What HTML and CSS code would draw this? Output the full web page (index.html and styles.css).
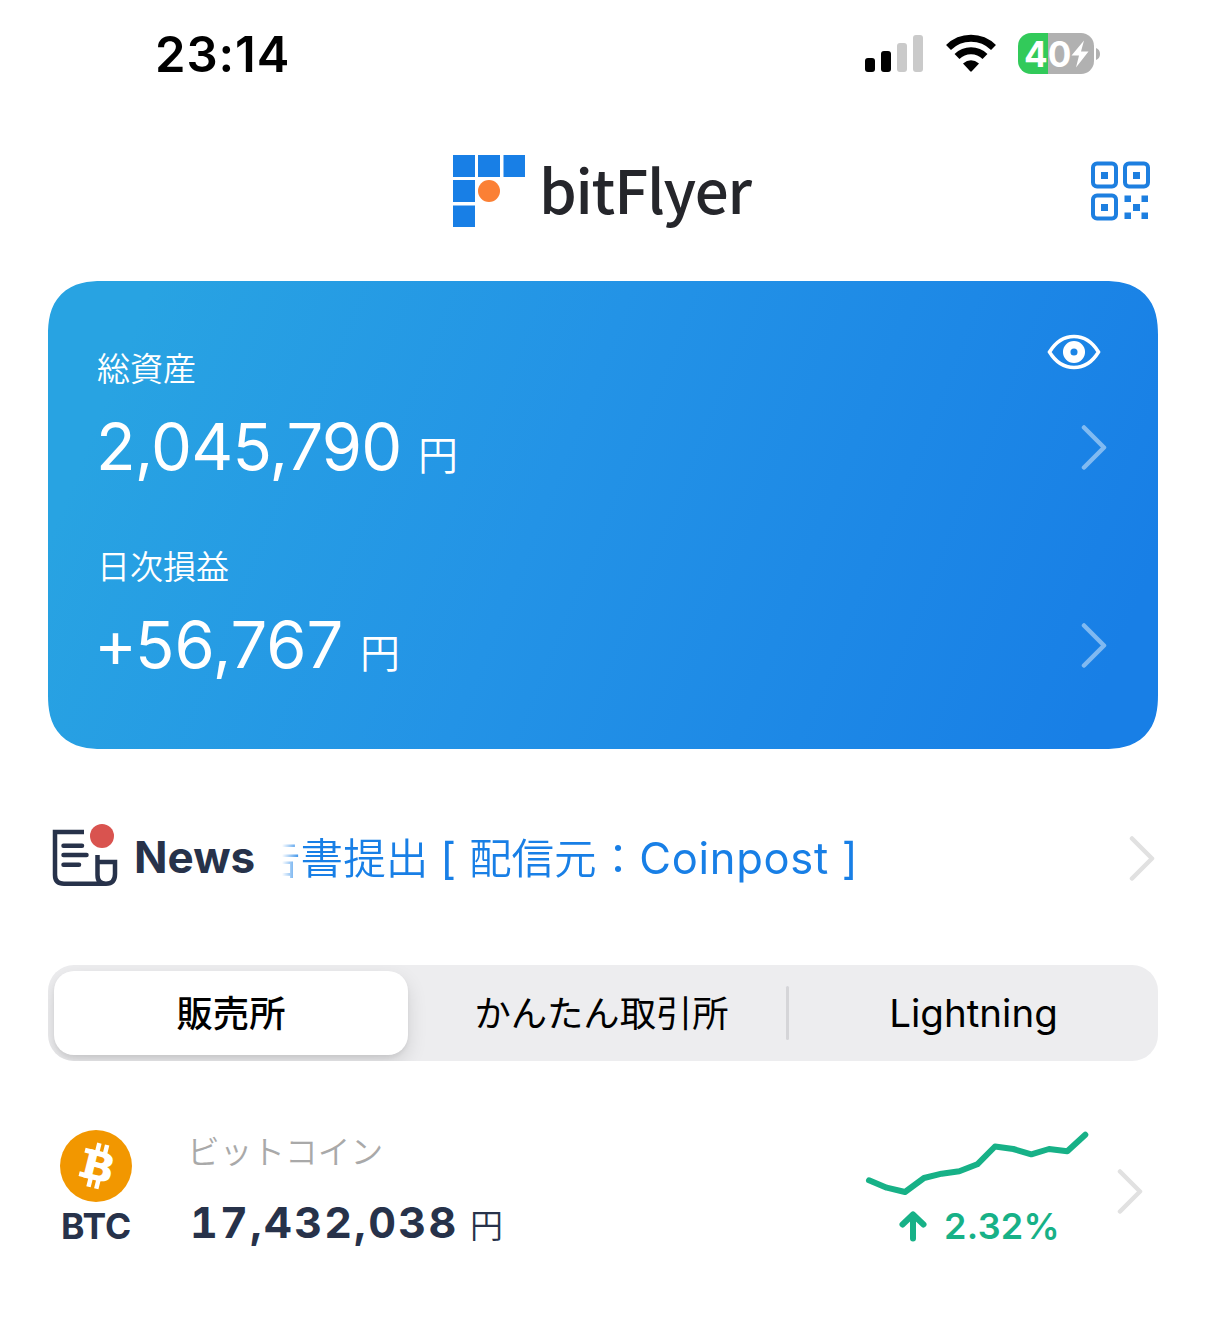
FILE: index.html
```html
<!DOCTYPE html>
<html lang="ja">
	<head>
		<meta charset="UTF-8" />
		<meta name="viewport" content="width=device-width, initial-scale=1.0" />
		<title>bitFlyer</title>
		<link rel="stylesheet" href="styles.css">
	</head>
	<body>
		<div id="app">
			<div class="status">
				<span class="time">23:14</span>
				<svg class="signal" width="60" height="40" viewBox="0 0 60 40">
					<rect x="1" y="24" width="10" height="14" rx="3" />
					<rect x="17" y="17" width="10" height="21" rx="3" />
					<rect class="off" x="33" y="9" width="10" height="29" rx="3" />
					<rect class="off" x="49" y="1" width="10" height="37" rx="3" />
				</svg>
				<svg class="wifi" width="52" height="40" viewBox="0 0 52 40">
					<path d="M3.500 13.500A32 32 0 0 1 48.500 13.500" />
					<path d="M12 22.500A20 20 0 0 1 40 22.500" />
					<path class="dot" d="M18 29.500Q26 23 34 29.500L26.800 37.300Q26 38 25.200 37.300Z" />
				</svg>
				<div class="battery">
					<span>40</span>
					<svg width="20" height="28" viewBox="0 0 18 28">
						<path d="M13 0.500L0.500 15.500H8L5 27.500L17.500 11.500H10Z" />
					</svg>
				</div>
				<svg class="cap" width="5" height="14" viewBox="0 0 5 14">
					<path d="M0 1Q4 2.500 4 7T0 13Z" />
				</svg>
			</div>

			<header>
				<div class="logo">
					<svg width="72" height="72" viewBox="0 0 72 72">
						<path fill="#187fe6" d="M0 0h22v22H0zM25 0h22v22H25zM50.500 0h21.500v22H50.500zM0 25h22v22H0zM0 50.500h22v21.500H0z" />
						<circle cx="36" cy="36" r="11" fill="#fb8035" />
					</svg>
					<span>bitFlyer</span>
				</div>
				<svg class="qr" width="60" height="60" viewBox="0 0 60 60">
					<g fill="none" stroke="#1d7fe0" stroke-width="4">
						<rect x="3" y="2.500" width="23" height="23" rx="4" />
						<rect x="35" y="2.500" width="23" height="23" rx="4" />
						<rect x="3" y="34.500" width="23" height="23" rx="4" />
					</g>
					<path fill="#1d7fe0" d="M11 11h7v7h-7zM43 11h7v7h-7zM11 43h7v7h-7zM34.500 34.500h6.500v6.500h-6.500zM51.500 34.500h6.500v6.500h-6.500zM43 43h7v7h-7zM34.500 51.500h6.500v6.500h-6.500zM51.500 51.500h6.500v6.500h-6.500z" />
				</svg>
			</header>

			<section class="card">
				<svg class="eye" width="54" height="36" viewBox="0 0 54 36">
					<path d="M2.500 18C8 9 16 2.500 27 2.500S46 9 51.500 18C46 27 38 33.500 27 33.500S8 27 2.500 18Z" />
					<circle cx="27" cy="18" r="7.300" />
				</svg>
				<div class="asset">
					<h2>総資産</h2>
					<div class="row">
						<span class="amount total">2,045,790</span>
						<span class="yen">円</span>
						<svg class="chevron" width="28" height="46" viewBox="0 0 28 46">
							<path d="M3 3.500L23 23.500L3 43.500" />
						</svg>
					</div>
				</div>
				<div class="asset">
					<h2>日次損益</h2>
					<div class="row">
						<span class="amount daily"><span class="sign">+</span>56,767</span>
						<span class="yen">円</span>
						<svg class="chevron" width="28" height="46" viewBox="0 0 28 46">
							<path d="M3 3.500L23 23.500L3 43.500" />
						</svg>
					</div>
				</div>
			</section>

			<section class="news">
				<svg class="paper" width="70" height="66" viewBox="0 0 70 66">
					<path d="M34 10H5V53Q5 61.700 14 61.700H56Q65 61.700 65 52V40H47.500M47.500 33V53Q47.500 61.700 56 61.700" />
					<path class="line" d="M13.500 23.700H32M13.500 33H36.500M13.500 42.700H29" />
					<circle cx="52" cy="14" r="12" />
				</svg>
				<h3>News</h3>
				<div class="ticker">
					<p>告書提出 <span class="latin">[</span> 配信元：<span class="latin">Coinpost ]</span></p>
				</div>
				<svg class="chevron gray" width="28" height="46" viewBox="0 0 28 46">
					<path d="M3 3.500L23 23.500L3 43.500" />
				</svg>
			</section>

			<nav class="tabs">
				<div class="tab active">販売所</div>
				<div class="tab">かんたん取引所</div>
				<div class="tab last">Lightning</div>
			</nav>

			<section class="coin">
				<div class="symbol">
					<svg width="72" height="72" viewBox="0 0 72 72">
						<circle cx="36" cy="36" r="36" fill="#f29700" />
						<g fill="#fff" transform="rotate(14 36 36)">
							<text x="22.500" y="50" textLength="33" lengthAdjust="spacingAndGlyphs">B</text>
							<path d="M31.500 13h4.500v10h-4.500zM39.500 13h4.500v10h-4.500zM31.500 48h4.500v10h-4.500zM39.500 48h4.500v10h-4.500zM21.500 20.800h9v5h-9zM21.500 45h9v5h-9z" />
						</g>
					</svg>
					<span>BTC</span>
				</div>
				<div class="info">
					<h4>ビットコイン</h4>
					<div class="price">
						<span class="num">17,432,038</span>
						<span class="unit">円</span>
					</div>
				</div>
				<div class="trend">
					<svg width="226" height="68" viewBox="864 1130 226 68">
						<polyline points="869,1180.300 886.700,1187.700 905,1192 924,1178 941.700,1173.700 959.300,1171.300 977.300,1164.300 995,1146.500 1013.300,1149 1031.300,1154.300 1049,1149 1067.300,1151.300 1085.300,1134.700" />
					</svg>
					<div class="change">
						<svg width="28" height="32" viewBox="0 0 28 32">
							<path d="M14 27.500V4M3.500 13.500L14 3.500L24.500 13.500" />
						</svg>
						<span>2.32%</span>
					</div>
				</div>
				<svg class="chevron gray" width="28" height="46" viewBox="0 0 28 46">
					<path d="M3 3.500L23 23.500L3 43.500" />
				</svg>
			</section>
		</div>
	</body>
</html>
```
FILE: styles.css
```css
* {
	box-sizing: border-box;
}
body {
	margin: 0;
	background: #fff;
	color: #27324a;
	font-family: Inter, "Noto Sans CJK JP", sans-serif;
}
h2, h3, h4, p {
	margin: 0;
}
svg {
	display: block;
	flex: none;
}
#app {
	width: 1206px;
	height: 1337px;
	overflow: hidden;
}
.status {
	display: flex;
	align-items: center;
	height: 108px;
	padding: 0 105px 0 155px;
	color: #000;
}
.time {
	flex: 1;
	font-size: 49px;
	font-weight: 600;
	letter-spacing: 0.9px;
}
.signal {
	margin-right: 21px;
}
.signal .off {
	fill: #cacaca;
}
.wifi {
	margin-right: 21px;
	fill: none;
	stroke: #000;
	stroke-width: 7;
}
.wifi .dot {
	fill: #000;
	stroke: none;
}
.battery {
	display: flex;
	align-items: center;
	width: 76px;
	height: 41px;
	margin-top: -1px;
	padding-left: 6px;
	border-radius: 13px;
	background: linear-gradient(90deg, #32ca5a 30px, #b1b1b1 30px);
	color: #fff;
	font-size: 35px;
	font-weight: 700;
}
.battery span {
	width: 46px;
}
.battery path {
	fill: #fff;
}
.cap {
	margin-left: 2px;
	fill: #b1b1b1;
}
header {
	display: flex;
	align-items: center;
	height: 173px;
	padding: 0 56px 7px 453px;
}
.logo {
	display: flex;
	flex: 1;
	align-items: center;
	gap: 14px;
	color: #25262b;
	font: 500 60px/72px "Noto Sans CJK JP", sans-serif;
	letter-spacing: -1.2px;
}
.logo span {
	margin-top: -6px;
}
.card {
	position: relative;
	height: 468px;
	margin: 0 48px;
	padding: 64px 49px 0 49px;
	border-radius: 47px;
	background: linear-gradient(112deg, #28a3e2 8%, #2393e6 45%, #187fe6 94%);
	color: #fff;
}
/* squircle corners where the browser knows them */
@supports (corner-shape: superellipse(1.3)) {
	.card {
		border-radius: 54px;
		corner-shape: superellipse(1.3);
	}
}
.eye {
	position: absolute;
	top: 53px;
	right: 57px;
	fill: none;
	stroke: #fff;
	stroke-width: 3.5;
}
.eye circle {
	stroke-width: 7.5;
}
.asset {
	height: 198px;
}
.asset h2 {
	height: 48px;
	font-size: 33px;
	font-weight: 350;
	line-height: 48px;
}
.row {
	display: flex;
	align-items: center;
	height: 108px;
}
.amount {
	margin-top: -2px;
	font-size: 65px;
	font-weight: 400;
}
.total {
	width: 322px;
	margin-left: -1px;
	letter-spacing: -0.8px;
}
.daily {
	width: 268px;
	margin-left: -5px;
}
.sign {
	position: relative;
	top: 4px;
	left: 2px;
}
.yen {
	flex: 1;
	padding-top: 12px;
	font-size: 40px;
	font-weight: 350;
}
.chevron {
	fill: none;
	stroke: rgba(255, 255, 255, 0.45);
	stroke-width: 4.5;
	stroke-linecap: round;
	stroke-linejoin: round;
}
.gray {
	stroke: #e1e1e1;
}
.news {
	display: flex;
	align-items: center;
	height: 216px;
	padding: 2px 49px 0 50px;
}
.paper {
	margin: -7px 14px 0 0;
	fill: none;
	stroke: #27324a;
	stroke-width: 4.5;
}
.paper .line {
	stroke-linecap: round;
}
.paper circle {
	fill: #d9534f;
	stroke: none;
}
.news h3 {
	width: 148px;
	margin-top: -2px;
	font-size: 44px;
	font-weight: 700;
}
.ticker {
	flex: 1;
	margin-top: -6px;
	overflow: hidden;
	-webkit-mask-image: linear-gradient(90deg, transparent, #000 20px);
	mask-image: linear-gradient(90deg, transparent, #000 20px);
}
.ticker p {
	margin-left: -24px;
	color: #187fe6;
	font-size: 42.6px;
	font-weight: 350;
	white-space: nowrap;
}
.latin {
	font-size: 43.5px;
	font-weight: 400;
	letter-spacing: 0.7px;
}
.tabs {
	display: flex;
	height: 96px;
	margin: 0 48px;
	padding: 6px;
	overflow: hidden;
	border-radius: 26px;
	background: #ededef;
	color: #000;
	font-size: 36.3px;
	line-height: 87px;
	text-align: center;
}
.tab {
	width: 387px;
	height: 84px;
}
.tab.active {
	width: 354px;
	border-radius: 20px;
	background: #fff;
	box-shadow: 0 8px 20px rgba(0, 0, 0, 0.12), 0 3px 4px rgba(0, 0, 0, 0.06);
	font-weight: 500;
}
.tab.last {
	width: 357px;
	font-size: 38.5px;
	line-height: 85px;
}
/* divider between the two idle tabs */
.tab.last::before {
	content: "";
	float: left;
	width: 3px;
	height: 54px;
	margin: 15px 0 0 -9px;
	border-radius: 2px;
	background: #d5d5d8;
}
.coin {
	display: flex;
	padding: 69px 67px 0 60px;
}
.symbol {
	width: 130px;
}
.symbol text {
	font: 700 40px "DejaVu Sans", sans-serif;
}
.symbol span {
	display: block;
	margin-left: 1px;
	font-size: 35.5px;
	font-weight: 700;
	line-height: 49px;
}
.info {
	flex: 1;
}
.info h4 {
	margin-left: -3px;
	color: #a9a9a9;
	font-size: 32.7px;
	font-weight: 350;
	line-height: 45px;
}
.price {
	display: flex;
	align-items: center;
	height: 94px;
}
.num {
	width: 280px;
	font-size: 43px;
	font-weight: 700;
	font-variant-numeric: tabular-nums;
	letter-spacing: 2.3px;
}
.unit {
	padding-top: 4px;
	font-size: 33px;
	font-weight: 350;
}
.trend {
	margin-right: 27px;
	color: #17b187;
	fill: none;
	stroke: #17b187;
	stroke-width: 6;
	stroke-linecap: round;
	stroke-linejoin: round;
}
.change {
	display: flex;
	align-items: center;
	height: 57px;
	padding-left: 35px;
	gap: 17px;
	font-size: 36px;
	font-weight: 600;
}
.change span {
	margin-top: -2px;
	stroke: none;
	letter-spacing: 0.3px;
}
.coin > .chevron {
	margin: 38px -6px 0 0;
}
```
